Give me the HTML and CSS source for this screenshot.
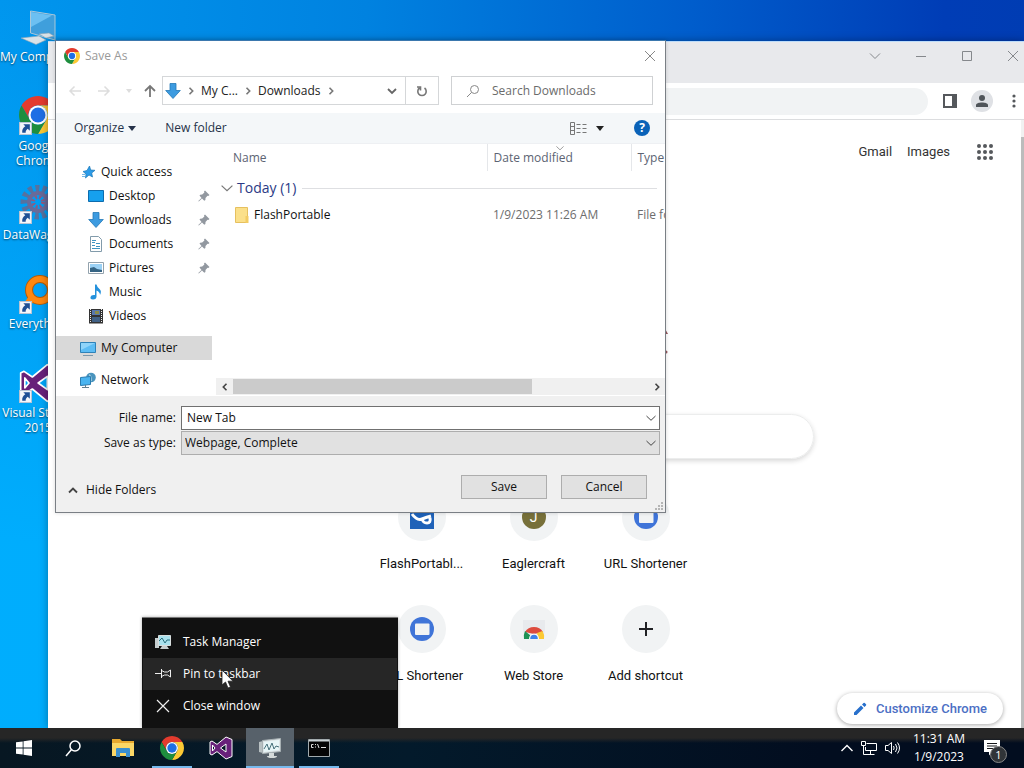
FILE: index.html
```html
<!DOCTYPE html>
<html lang="en">
<head>
<meta charset="utf-8">
<title>Desktop</title>
<link rel="stylesheet" href="styles.css">
</head>
<body>
<svg class="sprite" aria-hidden="true">
  <symbol id="chrome" viewBox="0 0 48 48">
    <path fill="#e33b2e" d="M24 12H44.78A24 24 0 0 0 3.22 12L13.61 30A12 12 0 0 1 24 12z"/>
    <path fill="#fcc934" d="M34.39 30L24 48A24 24 0 0 0 44.78 12H24A12 12 0 0 1 34.39 30z"/>
    <path fill="#1e8e3e" d="M13.61 30L3.22 12A24 24 0 0 0 24 48L34.39 30A12 12 0 0 1 13.61 30z"/>
    <circle cx="24" cy="24" r="12" fill="#fff"/><circle cx="24" cy="24" r="9.4" fill="#1f6fe5"/>
  </symbol>
  <symbol id="vs" viewBox="0 0 24 24">
    <path fill="#68217a" fill-rule="evenodd" stroke="#fff" stroke-width="1" stroke-linejoin="round" d="M17 1L23 3.5V20.5L17 23L8 15.600L3 19L1 18V6L3 5L8 8.400ZM17 8L11.500 12L17 16zM3.500 9V15L6 12z"/>
  </symbol>
  <symbol id="pin" viewBox="0 0 12 12">
    <path fill="#9298a0" d="M7 0.500L11.500 5L10.300 6L9.500 5.700L7.500 8L7.400 10L6.300 10.700L4 8.400L0.800 11.600L0.300 11.100L3.500 7.900L1.500 5.600L2.200 4.700L4.200 4.500L6.400 2.500L6 1.600z"/>
  </symbol>
  <symbol id="down" viewBox="0 0 16 16">
    <path fill="#3d9be0" stroke="#2378b8" stroke-width=".8" d="M5 .5H11V7.500H15.300L8 15.500L.7 7.500H5z"/>
  </symbol>
  <symbol id="short" viewBox="0 0 12 12">
    <path fill="#f4f6fa" stroke="#b8c4d4" d="M.5 .5h11v11H.5z"/>
    <path fill="#1e4f95" d="M4 2h6v6L8 6.200C6.500 7.300 6 8.500 6.200 10H3C2.600 7.500 3.700 5.500 5.800 4z"/>
  </symbol>
  <symbol id="chev" viewBox="0 0 10 10"><path fill="none" stroke="currentColor" d="M.5 3L5 7.300L9.500 3"/></symbol>
  <symbol id="right" viewBox="0 0 8 8"><path fill="none" stroke="currentColor" stroke-width="1.600" d="M2.500 .8L5.700 4L2.500 7.200"/></symbol>
  <symbol id="monitor" viewBox="0 0 16 16">
    <path fill="#5cbcf4" stroke="#2f82b8" d="M.5 2.500h15v10H.5z"/><path fill="#8fd4fa" d="M1 3h14L1 10z"/><path stroke="#7c98ab" d="M3 15.500h10"/>
  </symbol>
  <symbol id="urlicon" viewBox="0 0 24 24">
    <circle cx="12" cy="12" r="12" fill="#3f74d8"/><rect x="5" y="6.500" width="14.500" height="11.500" rx="1" fill="#f1f3f4"/>
  </symbol>
</svg>

<main class="desktop">
  <nav class="icons" aria-label="Desktop icons">
    <a href="#" class="shortcut">
      <svg class="big" viewBox="0 0 40 40"><path fill="#3f9fdc" stroke="#a9c8da" d="M12.500 4L37 8V33L12.500 26z"/><path fill="#6cc0f2" d="M13 5L34 8.500L13 20z"/><path fill="#dbe3e8" stroke="#8ba5b6" stroke-width=".6" d="M3 31L21 29L28 33L18 37.500zM21 27l10-1 5 3-8 2z"/></svg>
      <span class="line">My Computer</span></a>
    <a href="#" class="shortcut"><svg class="big" viewBox="0 0 40 40"><use href="#chrome" width="38" height="38" x="1"/><use href="#short" y="26" x="1" width="13" height="13"/></svg><span>Google Chrome</span></a>
    <a href="#" class="shortcut">
      <svg class="big" viewBox="0 0 40 40"><g fill="none" stroke="#56729f"><circle cx="20" cy="17" r="14" stroke-width="7" stroke-dasharray="4 3"/><circle cx="20" cy="17" r="9" stroke-width="4" stroke="#6a6a98"/></g><circle cx="20" cy="17" r="5" fill="none" stroke="#8f5b80" stroke-width="4" stroke-dasharray="2 2"/><use href="#short" y="26" x="1" width="13" height="13"/></svg>
      <span class="line">DataWagons</span></a>
    <a href="#" class="shortcut">
      <svg class="big" viewBox="0 0 40 40"><circle cx="22" cy="16" r="11" fill="none" stroke="#b55b08" stroke-width="8"/><circle cx="22" cy="16" r="11" fill="none" stroke="#ff870f" stroke-width="6"/><path stroke="#ff870f" stroke-width="7" d="M14 24L8 32"/><use href="#short" y="27" x="1" width="13" height="13"/></svg>
      <span>Everything</span></a>
    <a href="#" class="shortcut"><svg class="big" viewBox="0 0 40 40"><use href="#vs" width="40" height="40" x="1"/><use href="#short" y="27" x="1" width="13" height="13"/></svg><span>Visual Studio 2015</span></a>
  </nav>

  <section class="browser" aria-label="New Tab">
    <header class="tabstrip">
      <button aria-label="Search tabs"><svg viewBox="0 0 12 12"><path d="M1 3.500L6 8.500L11 3.500"/></svg></button>
      <button aria-label="Minimize"><svg viewBox="0 0 12 12"><path d="M1 6.500H11"/></svg></button>
      <button aria-label="Maximize"><svg viewBox="0 0 12 12"><path d="M1.500 1.500h9v9h-9z"/></svg></button>
      <button aria-label="Close"><svg viewBox="0 0 12 12"><path d="M1 1L11 11M11 1L1 11"/></svg></button>
    </header>
    <div class="toolbar">
      <input class="omnibox" aria-label="Address">
      <button aria-label="Side panel"><svg width="14" height="14" viewBox="0 0 14 14"><path fill="#55585c" fill-rule="evenodd" d="M0 0h14v14H0zM2 2v10h7V2z"/></svg></button>
      <button class="avatar" aria-label="Profile"><svg width="14" height="14" viewBox="0 0 14 14" fill="#4f5459"><circle cx="7" cy="4" r="3"/><path d="M1 13v-2c0-3.500 12-3.500 12 0v2z"/></svg></button>
      <button aria-label="Menu"><svg width="4" height="14" viewBox="0 0 4 14" fill="#55585c"><circle cx="2" cy="2" r="1.600"/><circle cx="2" cy="7" r="1.600"/><circle cx="2" cy="12" r="1.600"/></svg></button>
    </div>
    <div class="page">
      <div class="content">
        <nav class="links">
          <a href="#">Gmail</a><a href="#">Images</a>
          <button aria-label="Google apps"><svg width="16" height="16" viewBox="0 0 16 16" fill="#55585c"><circle cx="2" cy="2" r="2"/><circle cx="8" cy="2" r="2"/><circle cx="14" cy="2" r="2"/><circle cx="2" cy="8" r="2"/><circle cx="8" cy="8" r="2"/><circle cx="14" cy="8" r="2"/><circle cx="2" cy="14" r="2"/><circle cx="8" cy="14" r="2"/><circle cx="14" cy="14" r="2"/></svg></button>
        </nav>
        <svg class="logo" viewBox="0 0 272 92"><g fill="#93545a"><path d="M265 31l5 9h-6z"/><circle cx="268" cy="58" r="1.500"/></g></svg>
        <input class="search" aria-label="Search">
        <div class="tiles">
          <a href="#"><i><svg viewBox="0 0 24 24"><path fill="#1f62b8" d="M0 0h24v24H0z"/><path fill="none" stroke="#fff" stroke-width="3" d="M2 9Q7 16 12 14T21 11M12 14Q13 18 17 18T20 13"/></svg></i><span>FlashPortabl...</span></a>
          <a href="#"><i><b>J</b></i><span>Eaglercraft</span></a>
          <a href="#"><i><svg><use href="#urlicon"/></svg></i><span>URL Shortener</span></a>
          <a href="#"><i><svg><use href="#urlicon"/></svg></i><span>URL Shortener</span></a>
          <a href="#"><i><svg viewBox="0 0 24 24"><path fill="#e8eaed" d="M1 3h22v10L21 22H3L1 13z"/><path fill="#dd4b3e" d="M3 15Q6 10 12 10T21 15L12 17z"/><path fill="#209255" d="M3 14Q1.500 17 2 22H8L9 19z"/><path fill="#fcc934" d="M20.500 14Q22.500 17 22 22H16L15 16z"/><path fill="#fff" d="M7 22a5 5.500 0 0 1 10 0z"/><path fill="#3f82ea" d="M8.200 22a3.800 4.200 0 0 1 7.600 0z"/></svg></i><span>Web Store</span></a>
          <a href="#"><i><svg viewBox="0 0 24 24"><path stroke="#202124" stroke-width="2" d="M12 5v14M5 12h14"/></svg></i><span>Add shortcut</span></a>
        </div>
        <button class="customize"><svg width="14" height="14" viewBox="0 0 14 14"><path fill="#2870cc" d="M1 10.500V13h2.500L10.500 6L8 3.500zM9 2.500L10.500 1q.7-.5 1.300 0L13 2.200q.5.600 0 1.300L11.500 5z"/></svg>Customize Chrome</button>
      </div>
      <div class="scroll"><div></div></div>
    </div>
  </section>

  <section class="dialog" role="dialog" aria-label="Save As">
    <header class="title">
      <svg width="16" height="16"><use href="#chrome"/></svg><span>Save As</span>
      <button aria-label="Close"><svg width="12" height="12" viewBox="0 0 12 12"><path stroke="#888" d="M1 1L11 11M11 1L1 11"/></svg></button>
    </header>
    <div class="nav">
      <div class="arrows">
        <button aria-label="Back"><svg width="14" height="12" viewBox="0 0 14 12" stroke="#ddd" fill="none" stroke-width="1.500"><path d="M13 6H2M6.500 1.500L2 6L6.500 10.500"/></svg></button>
        <button aria-label="Forward"><svg width="14" height="12" viewBox="0 0 14 12" stroke="#ddd" fill="none" stroke-width="1.500"><path d="M1 6H12M7.500 1.500L12 6L7.500 10.500"/></svg></button>
        <button aria-label="Recent"><svg width="6" height="4" viewBox="0 0 6 4"><path fill="#ddd" d="M0 0h6L3 4z"/></svg></button>
        <button aria-label="Up"><svg width="12" height="14" viewBox="0 0 12 14" stroke="#777" fill="none" stroke-width="1.800"><path d="M6 13V2M1 7L6 2L11 7"/></svg></button>
      </div>
      <div class="crumbs">
        <svg width="16" height="16"><use href="#down"/></svg>
        <svg class="sep"><use href="#right"/></svg><a href="#">My C...</a>
        <svg class="sep"><use href="#right"/></svg><a href="#">Downloads</a>
        <svg class="sep"><use href="#right"/></svg>
        <button class="drop" aria-label="Previous locations"><svg width="10" height="10" viewBox="0 0 10 10"><path fill="none" stroke="#666" stroke-width="1.800" d="M1 3L5 7L9 3"/></svg></button>
        <button class="refresh" aria-label="Refresh"><svg width="12" height="12" viewBox="0 0 12 12" fill="none" stroke="#777" stroke-width="1.600"><path d="M8.500 3A4.200 4.200 0 1 1 3.500 3M1 2h3.500v3.500"/></svg></button>
      </div>
      <label class="find"><svg width="14" height="14" viewBox="0 0 14 14" fill="none" stroke="#888"><circle cx="8.500" cy="5.500" r="4"/><path d="M5.500 8.500L1 13"/></svg><input placeholder="Search Downloads" aria-label="Search Downloads"></label>
    </div>
    <div class="commands">
      <button>Organize <svg width="8" height="5" viewBox="0 0 8 5"><path d="M0 0h8L4 5z"/></svg></button>
      <button>New folder</button>
      <button class="view" aria-label="Change view"><svg width="17" height="13" viewBox="0 0 17 13" fill="none" stroke="#777"><path d="M.5 .5h4v12h-4zM.5 4.500h4M.5 8.500h4"/><path stroke-dasharray="4 2" d="M6.500 2.500H17M6.500 6.500H17M6.500 10.500H17"/></svg><svg width="8" height="5" viewBox="0 0 8 5"><path fill="#222" d="M0 0h8L4 5z"/></svg></button>
      <button class="help" aria-label="Help">?</button>
    </div>
    <div class="panes">
      <nav class="tree" aria-label="Folders">
        <a href="#"><svg viewBox="0 0 16 16"><path fill="#2b9be8" stroke="#1877b8" stroke-width=".7" d="M9.500 2L10.700 6L15 6.300L11.700 9L12.500 13L9 11L5.500 14L6 10L3 7.500L7 6.500z"/><path stroke="#74b9e8" d="M2 10.500h3M2 12.500h3"/></svg>Quick access</a>
        <a href="#" class="sub"><svg viewBox="0 0 16 16"><path fill="#16a0ee" stroke="#0c6cae" d="M.5 2.500h15v11H.5z"/></svg>Desktop<svg class="pin"><use href="#pin"/></svg></a>
        <a href="#" class="sub"><svg><use href="#down"/></svg>Downloads<svg class="pin"><use href="#pin"/></svg></a>
        <a href="#" class="sub"><svg viewBox="0 0 16 16"><path fill="#fff" stroke="#829bab" d="M2.500 .5h8l3 3v12h-11z"/><path stroke="#3f94c2" d="M4 4.500h4M4 6.500h3M8 7.500h4M4 9.500h3M8 10.500h4M4 12.500h8"/></svg>Documents<svg class="pin"><use href="#pin"/></svg></a>
        <a href="#" class="sub"><svg viewBox="0 0 16 16"><path fill="#fff" stroke="#93a2ad" d="M.5 2.500h15v11H.5z"/><path fill="#9bd1f5" d="M2 4h12v8H2z"/><path fill="#356484" d="M2 8l4-1 3 2 5 1v2H2z"/></svg>Pictures<svg class="pin"><use href="#pin"/></svg></a>
        <a href="#" class="sub"><svg viewBox="0 0 16 16"><path fill="#2491dc" d="M7 .5h1.500Q9 3 11.500 5T12 11q0-3-3.500-4.500V13q-.5 2.500-3.500 2.500T2.500 13Q3 10.500 7 11z"/></svg>Music</a>
        <a href="#" class="sub"><svg viewBox="0 0 16 16"><path fill="#333" d="M1 1h14v14.500H1z"/><path stroke="#eee" stroke-dasharray="1 1" d="M2.500 1v14M13.500 1v14"/><path fill="#5878ae" d="M4 2h8v5H4z"/><path fill="#8a8b4a" d="M7 3h4v3H7z"/><path fill="#416186" d="M4 9h8v5H4z"/></svg>Videos</a>
        <a href="#" class="apart on"><svg><use href="#monitor"/></svg>My Computer</a>
        <a href="#" class="apart"><svg viewBox="0 0 16 16"><circle cx="11" cy="5.500" r="4.800" fill="#4a94bd"/><path fill="#9fc8dc" d="M9 2q3 1 3 7h-3z"/><path fill="#4ab4f0" stroke="#2a7cb0" d="M.5 5.500l10-1v8l-10 1z"/><path stroke="#637f90" d="M2 15.500h7M5.500 13v3"/></svg>Network</a>
      </nav>
      <div class="list">
        <table>
          <colgroup><col class="c1"><col class="c2"><col></colgroup>
          <thead><tr><th>Name</th><th>Date modified<svg class="sort" width="8" height="8"><use href="#chev"/></svg></th><th>Type</th></tr></thead>
          <tbody>
            <tr class="group"><td colspan="3"><div><svg width="12" height="12"><use href="#chev"/></svg><span>Today (1)</span><hr></div></td></tr>
            <tr><td class="file"><svg width="14" height="16" viewBox="0 0 14 16"><path fill="#fbe08a" stroke="#e6c05f" d="M.5 .5h12v15H.5z"/><path fill="#f3cc63" d="M10.500 9h3v7h-3z"/></svg>FlashPortable</td><td>1/9/2023 11:26 AM</td><td>File folder</td></tr>
          </tbody>
        </table>
        <div class="hbar"><button aria-label="Scroll left"><svg width="8" height="8" class="flip"><use href="#right"/></svg></button><div><span></span></div><button aria-label="Scroll right"><svg width="8" height="8"><use href="#right"/></svg></button></div>
      </div>
    </div>
    <footer class="foot">
      <div class="fields">
        <label for="fname">File name:</label>
        <div class="box"><input id="fname" value="New Tab"><svg width="10" height="10"><use href="#chev"/></svg></div>
        <label for="ftype">Save as type:</label>
        <div class="box"><select id="ftype"><option>Webpage, Complete</option></select><svg width="10" height="10"><use href="#chev"/></svg></div>
      </div>
      <div class="actions">
        <button class="hide"><svg width="10" height="10" viewBox="0 0 10 10"><path fill="none" stroke="#444" stroke-width="1.800" d="M1 7.500L5 3.500L9 7.500"/></svg>Hide Folders</button>
        <button class="push">Save</button><button class="push">Cancel</button>
      </div>
      <svg class="grip" width="9" height="9" viewBox="0 0 9 9"><path fill="#b5b5b5" d="M6 0h2v2H6zM3 3h2v2H3zM6 3h2v2H6zM0 6h2v2H0zM3 6h2v2H3zM6 6h2v2H6z"/></svg>
    </footer>
  </section>

  <div class="menu" role="menu">
    <button role="menuitem"><svg viewBox="0 0 16 16"><path fill="#c5cdce" d="M0 4h4v10H0zM7 12h5l2 3H5z"/><path fill="#a9e1ed" stroke="#d8dede" d="M3.500 1.500h12v10h-12z"/><path fill="none" stroke="#286f7d" d="M4 7l3-3 3 5 2-3h3"/></svg>Task Manager</button>
    <button role="menuitem" class="hot"><svg viewBox="0 0 16 16" fill="none" stroke="#eee"><path d="M0 7.500h6M6.500 3v9M6.500 4.500l3 1.500h3L15.500 4v7l-3-2h-3l-3 1.500"/></svg>Pin to taskbar</button>
    <button role="menuitem"><svg viewBox="0 0 16 16" stroke="#eee" stroke-width="1.200"><path d="M2 2L14 14M14 2L2 14"/></svg>Close window</button>
  </div>
  <svg class="cursor" width="13" height="20" viewBox="0 0 13 20"><path fill="#fff" stroke="#222" stroke-width=".8" d="M1 1V16L4.500 13L7 19L9.500 18L7 12.200H12z"/></svg>
</main>

<footer class="taskbar">
  <button aria-label="Start"><svg width="16" height="16" viewBox="0 0 16 16" fill="#fff"><path d="M0 2.300L6.700 1.400V7.600H0zM7.500 1.300L16 0V7.600H7.500zM0 8.400H6.700V14.600L0 13.700zM7.500 8.400H16V16L7.500 14.800z"/></svg></button>
  <button aria-label="Search"><svg width="18" height="18" viewBox="0 0 18 18" fill="none" stroke="#fff" stroke-width="1.500"><circle cx="11" cy="7" r="5"/><path d="M7.500 10.500L2 17"/></svg></button>
  <button class="first" aria-label="File Explorer"><svg width="22" height="20" viewBox="0 0 22 20"><path fill="#e8a92f" d="M0 1h8l2 2h12v5H0z"/><path fill="#fbd766" d="M0 5h22v13H0z"/><path fill="#3a8fd0" d="M4 11q0-1 1-1h12q1 0 1 1v8h-4v-4H8v4H4z"/></svg></button>
  <button class="run" aria-label="Google Chrome"><svg width="24" height="24"><use href="#chrome"/></svg></button>
  <button aria-label="Visual Studio"><svg width="24" height="24"><use href="#vs"/></svg></button>
  <button class="run active" aria-label="Task Manager"><svg width="24" height="22" viewBox="0 0 24 22"><path fill="#b8c0c2" d="M1 5l4-1v12l-4-1z"/><path fill="#dde4e6" stroke="#a7b0b3" d="M4.500 3.500l18-2v13l-18 2z"/><path fill="#e7f5f7" d="M6 5l15-2v10L6 15z"/><path fill="none" stroke="#48717b" d="M6 12l3-5 2 6 3-7 2 6 2-3 3 1"/><path fill="#d5dada" d="M11 16h5v3h3q0 2-5 2t-5-2h2z"/></svg></button>
  <button class="run" aria-label="Command Prompt"><svg width="22" height="18" viewBox="0 0 22 18"><path fill="#050505" stroke="#a2aaad" d="M.5 .5h21v17H.5z"/><path fill="#cbd2d5" d="M1 1h20v1.500H1z"/><path fill="none" stroke="#ddd" d="M5.500 5.500h-2v3h2M7.500 5v1M7.500 7.500v1M9.500 5l1.500 4M13 8.500h5"/></svg></button>
  <div class="tray">
    <button aria-label="Show hidden icons"><svg width="12" height="12" viewBox="0 0 12 12" fill="none" stroke="#fff" stroke-width="1.400"><path d="M.5 9L6 3.500L11.500 9"/></svg></button>
    <button aria-label="Network"><svg width="16" height="14" viewBox="0 0 16 14" fill="none" stroke="#fff"><path d="M5.500 2.500h10v7h-11V6M.5 .5h4v4h-4zM2.500 4.500v9M2.500 13.500h11M9.500 9.500v4"/></svg></button>
    <button aria-label="Volume"><svg width="16" height="14" viewBox="0 0 16 14" fill="none" stroke="#fff"><path d="M.5 4.500h2.500L6.500 1.500v11L3 9.500H.5zM8.500 5q1.300 2 0 4M10.500 3q3 4 0 8M12.500 1.500q4 5.500 0 11"/></svg></button>
    <time datetime="2023-01-09T11:31"><span>11:31 AM</span><span>1/9/2023</span></time>
    <button class="notes" aria-label="Notifications"><svg width="16" height="16" viewBox="0 0 16 16"><path fill="#fff" d="M0 0h16v12H8L5 15.500V12H0z"/><path stroke="#17191c" d="M3 3.500h10M3 6h10M3 8.500h7"/></svg><b>1</b></button>
  </div>
</footer>
</body>
</html>
```
FILE: styles.css
```css
* { box-sizing: border-box; }
body {
  margin: 0; height: 100vh; overflow: hidden;
  display: grid; grid-template-rows: 1fr 40px;
  font: 12px/16px "Open Sans", "Noto Sans", sans-serif; color: #111;
}
a { color: inherit; text-decoration: none; }
button, input, select { font: inherit; color: inherit; margin: 0; padding: 0; border: 0; background: none; border-radius: 0; outline: 0; }
button { display: flex; align-items: center; justify-content: center; white-space: nowrap; }
svg { display: block; flex: none; }
.sprite { position: absolute; width: 0; height: 0; }

.desktop {
  position: relative; overflow: hidden; min-height: 0;
  background: linear-gradient(180deg, rgba(0,176,255,0) 0, rgba(0,176,255,.9) 75%) 0 0 / 60px 100% no-repeat,
    linear-gradient(92deg, #0096ee 0, #0082e0 35%, #005dcc 66%, #003db6 90%, #003cb2 100%);
}
.icons { display: grid; grid-auto-rows: 89px; width: 76px; }
.shortcut { display: flex; flex-direction: column; align-items: center; gap: 2px; padding-top: 7px; color: #fff; text-align: center; line-height: 15px; text-shadow: 0 1px 2px rgba(0,0,0,.6); }
.line { white-space: nowrap; }
.big { width: 40px; height: 40px; }

/* browser window */
.browser { position: absolute; left: 48px; top: 41px; right: 0; bottom: 0; background: #fff; overflow: hidden; display: flex; flex-direction: column; font-family: Roboto, sans-serif; font-size: 13px; box-shadow: 0 0 8px rgba(0,0,0,.35); }
.tabstrip { height: 42px; flex: none; display: flex; justify-content: flex-end; margin-right: -12px; background: #e8e9ec; border-top: 1px solid #bcdcfa; }
.tabstrip button { width: 46px; height: 28px; }
.tabstrip svg { width: 12px; height: 12px; fill: none; stroke: #85888c; }
.toolbar { height: 37px; flex: none; display: flex; align-items: center; border-bottom: 1px solid #dcdddf; padding-right: 4px; }
.toolbar button { width: 24px; height: 22px; }
.toolbar .avatar { width: 22px; border-radius: 50%; background: #dfe1e5; margin: 0 15px 0 9px; }
.toolbar button:last-child { width: 12px; }
.omnibox { flex: 1; height: 27px; margin: 0 10px; border-radius: 14px; background: #f1f3f4; }
.page { position: relative; flex: 1; min-height: 0; display: flex; }
.content { flex: 1; min-width: 0; display: flex; flex-direction: column; align-items: center; padding-right: 2px; }
.scroll { width: 3px; padding-top: 17px; background: #f1f1f1; display: flex; }
.scroll div { flex: 1; background: #bcbcbc; }
.links { align-self: flex-end; flex: none; display: flex; align-items: center; gap: 15px; padding: 16px 26px 0 0; color: #333; height: 48px; }
.links button { margin-left: 12px; }
.logo { width: 272px; height: 92px; margin-top: 126px; }
.search { width: 561px; max-width: 90%; height: 45px; flex: none; margin: 28px 0 34px; border-radius: 23px; border: 1px solid #eceded; box-shadow: 0 2px 5px rgba(32,33,36,.18); }
.tiles { display: grid; grid-template-columns: repeat(3, 112px); grid-auto-rows: 112px; }
.tiles a { display: flex; flex-direction: column; align-items: center; gap: 15px; white-space: nowrap; }
.tiles i { width: 48px; height: 48px; border-radius: 50%; background: #f1f3f4; display: grid; place-items: center; font-style: normal; }
.tiles svg { width: 24px; height: 24px; }
.tiles b { width: 24px; height: 24px; border-radius: 50%; background: #77703a; color: #fff; text-align: center; font: 14px/24px Roboto, sans-serif; }
.customize { position: absolute; right: 21px; bottom: 4px; height: 31px; padding: 0 16px; gap: 9px; border-radius: 16px; background: #fff; color: #4c6fc4; font-weight: 500; box-shadow: 0 1px 4px rgba(0,0,0,.35); }

/* save dialog */
.dialog { position: absolute; left: 55px; top: 40px; width: 611px; background: #fff; border: 1px solid #7a7f85; border-top-color: #3b78ae; overflow: hidden; box-shadow: 0 0 4px rgba(0,0,0,.15); }
.title { display: flex; align-items: center; gap: 5px; height: 30px; padding: 0 8px; color: #999; }
.title button { margin-left: auto; width: 14px; height: 24px; }
.nav { display: flex; height: 42px; padding: 5px 12px 8px 12px; }
.arrows { display: flex; align-items: center; width: 94px; gap: 15px; }
.arrows button:nth-child(4) { margin-left: -3px; }
.crumbs { display: flex; align-items: center; gap: 6px; width: 277px; border: 1px solid #d5d7d9; padding-left: 2px; color: #222; }
.sep { width: 8px; height: 8px; color: #777; }
.drop { margin-left: auto; width: 14px; }
.refresh { align-self: stretch; width: 33px; border-left: 1px solid #d5d7d9; }
.find { flex: 1; margin-left: 12px; display: flex; align-items: center; gap: 12px; padding-left: 14px; border: 1px solid #cfd1d3; }
.find input { flex: 1; min-width: 0; }
.find input::placeholder { color: #6b6b6b; opacity: 1; }
.commands { display: flex; align-items: center; height: 31px; padding: 0 15px 0 18px; background: #f4f7f9; color: #26334a; border-bottom: 1px solid #eef0f3; }
.commands button { gap: 4px; margin-right: 29px; fill: #26334a; }
.commands .view { margin: 0 30px 0 auto; gap: 9px; }
.commands .help { margin: 0; width: 16px; height: 16px; border-radius: 50%; background: #0a62b8; color: #fff; font-weight: 700; }
.panes { display: flex; height: 252px; }
.tree { width: 156px; padding-top: 16px; }
.tree a { display: flex; align-items: center; gap: 5px; height: 24px; padding-left: 24px; }
.tree a svg { width: 16px; height: 16px; }
.tree .sub { padding-left: 32px; }
.tree a .pin { width: 12px; height: 12px; margin: 0 2px 0 auto; }
.tree .apart { margin-top: 8px; }
.tree .on { background: #d9d9d9; }
.list { flex: 1; min-width: 0; margin-left: 4px; display: flex; flex-direction: column; justify-content: space-between; }
table { table-layout: fixed; width: 100%; border-collapse: collapse; }
.c1 { width: 271px; } .c2 { width: 144px; }
th, td { padding: 0 0 0 6px; height: 20px; text-align: left; font-weight: 400; white-space: nowrap; overflow: hidden; color: #6d6d6d; }
th { position: relative; height: 27px; color: #5c6473; border-left: 1px solid #e5e7ea; }
th:first-child { padding-left: 17px; border: 0; }
.sort { position: absolute; left: 68px; top: 0; color: #888; }
.group td { height: 34px; padding: 0 8px 0 5px; }
.group div { display: flex; align-items: center; gap: 4px; font-size: 14px; line-height: 20px; color: #2b3a85; }
.group svg { color: #777; }
.group hr { flex: 1; border: 0; border-top: 1px solid #dedfe2; margin: 0 0 0 2px; }
.file { padding-left: 19px; color: #111; }
.file svg { display: inline-block; vertical-align: middle; margin-right: 5px; }
.hbar { display: flex; height: 17px; background: #f0f0f0; margin-bottom: 1px; }
.hbar button { width: 17px; color: #444; }
.hbar div { flex: 1; }
.hbar span { display: block; width: 72%; height: 15px; margin-top: 1px; background: #cbcbcb; }
.flip { transform: scaleX(-1); }
.foot { position: relative; background: #f0f0f0; padding: 10px 5px 13px 12px; }
.fields { display: grid; grid-template-columns: 108px 1fr; column-gap: 5px; row-gap: 1px; align-items: center; }
.fields label { text-align: right; }
.box { display: grid; align-items: center; }
.box > * { grid-area: 1 / 1; }
.box svg { justify-self: end; margin-right: 4px; color: #444; pointer-events: none; }
.box input { height: 24px; border: 1px solid #707070; background: #fff; padding: 0 5px 2px; width: 100%; }
.box select { appearance: none; height: 24px; width: 100%; border: 1px solid #adadad; background: #e1e1e1; padding: 0 3px; }
.actions { display: flex; gap: 14px; margin: 20px 13px 0 0; }
.push { width: 86px; height: 24px; border: 1px solid #adadad; background: #e1e1e1; }
.hide { gap: 8px; margin-right: auto; padding-top: 5px; }
.grip { position: absolute; right: 1px; bottom: 1px; }

/* taskbar jump list */
.menu { position: absolute; left: 142px; bottom: 0; width: 256px; padding: 8px 1px 6px; background: #111; border-top: 1px solid #777; box-shadow: 0 0 3px rgba(0,0,0,.3); color: #fff; }
.menu button { display: flex; justify-content: flex-start; width: 100%; height: 32px; gap: 12px; padding-left: 12px; }
.menu svg { width: 16px; height: 16px; }
.menu .hot { background: #262626; }
.cursor { position: absolute; left: 221px; top: 669px; }

.taskbar { display: flex; gap: 1px; background: linear-gradient(180deg, #262626 0 10px, rgba(38,38,38,0) 15px), linear-gradient(90deg, #071722, #031a2b 40%, #020d1f 80%); color: #fff; }
.taskbar > button { width: 48px; position: relative; }
.taskbar > .first { margin-left: 1px; }
.run::after { content: ""; position: absolute; left: 4px; right: 4px; bottom: 0; height: 2px; background: #76b9ed; }
.taskbar .active { background: #57616a; }
.active::after { left: 0; right: 0; }
.tray { margin-left: auto; display: flex; align-items: center; gap: 8px; padding-right: 17px; }
.tray time { display: grid; text-align: center; line-height: 18px; width: 60px; }
.notes { position: relative; width: 30px; height: 40px; }
.notes b { position: absolute; left: 13px; top: 18px; width: 17px; height: 17px; border-radius: 50%; border: 1px solid #888; background: #303438; font: 11px/15px "Open Sans", sans-serif; text-align: center; }
```
